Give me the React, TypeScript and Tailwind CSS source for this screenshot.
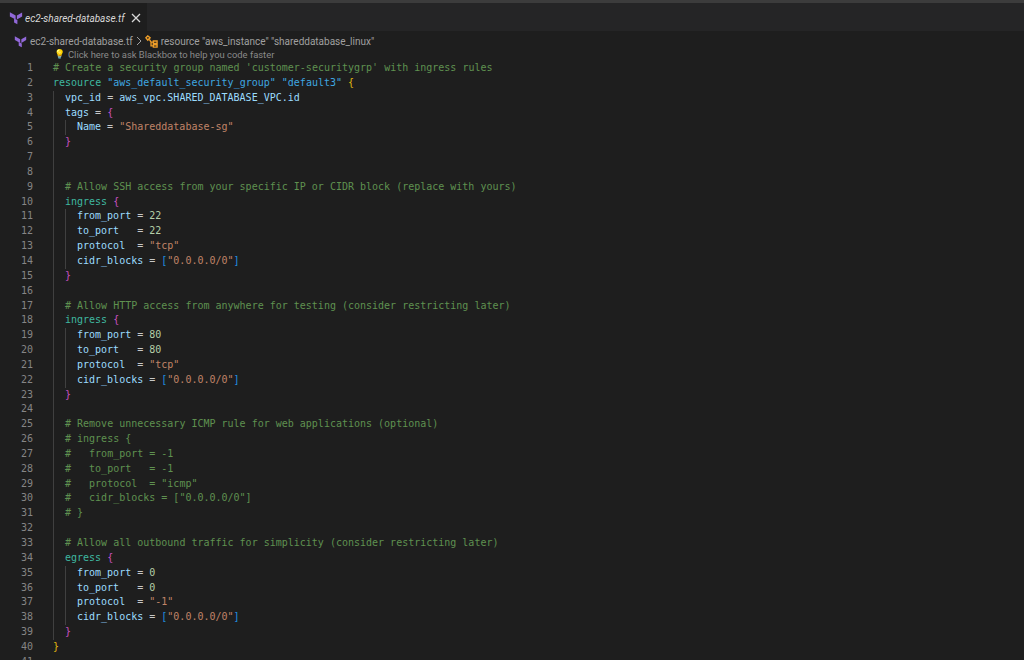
import React from 'react';

type Tok = [string, string];

const C = 'text-[#5f9150]';
const K = 'text-[#3fb8a0]';
const L = 'text-[#3fa7e0]';
const A = 'text-[#9cdcfe]';
const S = 'text-[#c08468]';
const N = 'text-[#b5cea8]';
const P = 'text-[#c8c8c8]';
const G = 'text-[#e0b810]';
const M = 'text-[#c850c0]';
const B = 'text-[#1f8fe0]';

const attr = (name: string, val: Tok[]): Tok[] => [[name, A], [' = ', P], ...val];
const cidr: Tok[] = [['cidr_blocks', A], [' = ', P], ['[', B], ['"0.0.0.0/0"', S], [']', B]];

const block = (from: string, proto: string): { d: number; t: Tok[] }[] => [
  { d: 2, t: [['from_port', A], [' = ', P], [from, N]] },
  { d: 2, t: [['to_port', A], ['   = ', P], [from, N]] },
  { d: 2, t: [['protocol', A], ['  = ', P], [`"${proto}"`, S]] },
  { d: 2, t: cidr },
];

const lines: { d: number; t: Tok[] }[] = [
  { d: 0, t: [["# Create a security group named 'customer-securitygrp' with ingress rules", C]] },
  { d: 0, t: [['resource', K], [' ', P], ['"aws_default_security_group"', L], [' ', P], ['"default3"', L], [' ', P], ['{', G]] },
  { d: 1, t: [['vpc_id', A], [' = ', P], ['aws_vpc.SHARED_DATABASE_VPC.id', A]] },
  { d: 1, t: [['tags', A], [' = ', P], ['{', M]] },
  { d: 2, t: attr('Name', [['"Shareddatabase-sg"', S]]) },
  { d: 1, t: [['}', M]] },
  { d: 1, t: [] },
  { d: 1, t: [] },
  { d: 1, t: [['# Allow SSH access from your specific IP or CIDR block (replace with yours)', C]] },
  { d: 1, t: [['ingress', K], [' ', P], ['{', M]] },
  ...block('22', 'tcp'),
  { d: 1, t: [['}', M]] },
  { d: 1, t: [] },
  { d: 1, t: [['# Allow HTTP access from anywhere for testing (consider restricting later)', C]] },
  { d: 1, t: [['ingress', K], [' ', P], ['{', M]] },
  ...block('80', 'tcp'),
  { d: 1, t: [['}', M]] },
  { d: 1, t: [] },
  { d: 1, t: [['# Remove unnecessary ICMP rule for web applications (optional)', C]] },
  { d: 1, t: [['# ingress {', C]] },
  { d: 1, t: [['#   from_port = -1', C]] },
  { d: 1, t: [['#   to_port   = -1', C]] },
  { d: 1, t: [['#   protocol  = "icmp"', C]] },
  { d: 1, t: [['#   cidr_blocks = ["0.0.0.0/0"]', C]] },
  { d: 1, t: [['# }', C]] },
  { d: 1, t: [] },
  { d: 1, t: [['# Allow all outbound traffic for simplicity (consider restricting later)', C]] },
  { d: 1, t: [['egress', K], [' ', P], ['{', M]] },
  ...block('0', '-1'),
  { d: 1, t: [['}', M]] },
  { d: 0, t: [['}', G]] },
];

const TfIcon = ({ className }: { className: string }) => (
  <svg viewBox="0 0 16 16" className={className} fill="#9168d8">
    <path d="M1 1.5 7.6 5.2v4.6L1 6.2z" />
    <path d="M9 5.2 15 1.8v4.4L9 9.8z" />
    <path d="M5.8 8.6 9.6 10.4v4.8L5.8 13.2z" />
  </svg>
);

const App: React.FC = () => {
  return (
    <div className="h-[660px] w-[1024px] overflow-hidden bg-[#1e1e1e] font-['Roboto',sans-serif]">
      <div className="h-[3px] bg-[#3c3c3c]" />
      {/* Tabs */}
      <div className="flex h-[28px] bg-[#252526]">
        <div className="flex w-[147px] items-center whitespace-nowrap bg-[#1e1e1e] pl-[9px] pt-[2px]">
          <TfIcon className="h-[14px] w-[14px] shrink-0" />
          <span className="ml-[2px] text-[10px] italic text-[#d8d8d8]">ec2-shared-database.tf</span>
          <svg viewBox="0 0 10 10" className="ml-[6px] h-[10px] w-[10px]" fill="none" stroke="#d8d8d8" strokeWidth="1.3">
            <path d="M1 1l8 8M9 1l-8 8" />
          </svg>
        </div>
      </div>
      {/* Breadcrumbs */}
      <div className="flex h-[18px] items-center whitespace-nowrap pl-[14px] pt-[2px] text-[10px] text-[#a0a0a0]">
        <TfIcon className="h-[13px] w-[13px]" />
        <span className="ml-[3px]">ec2-shared-database.tf</span>
        <svg viewBox="0 0 8 10" className="mx-[2px] h-[10px] w-[8px]" fill="none" stroke="#a0a0a0">
          <path d="M2 1l4 4-4 4" />
        </svg>
        <svg viewBox="0 0 14 14" className="h-[13px] w-[13px]" fill="none" stroke="#ee9d28" strokeWidth="1.5">
          <path d="M1 3 3 1 5.5 3 3 5.5zM9 6.5h4v2.5H9zM9 10.5h4V13H9zM4.5 4.5 6.5 7.7H9M6.5 7.7v4H9" />
        </svg>
        <span className="ml-[3px]">resource "aws_instance" "shareddatabase_linux"</span>
      </div>
      {/* Blackbox hint */}
      <div className="flex h-[12px] items-center whitespace-nowrap pl-[54px] text-[9.4px] text-[#8a8a8a]">
        <span className="w-[14px] text-[9px]">💡</span>
        <span>Click here to ask Blackbox to help you code faster</span>
      </div>
      {/* Code */}
      <div className="font-['DejaVu_Sans_Mono',monospace] text-[10px] leading-[14.85px]">
        {lines.map((line, i) => (
          <div key={i} className="flex h-[14.85px]">
            <div className="w-[33px] shrink-0 text-right text-[#858585]">{i + 1}</div>
            <div className="flex pl-[20px] whitespace-pre">
              {Array.from({ length: line.d }).map((_, j) => (
                <span key={j} className="inline-block w-[12px] border-l border-[#404040]" />
              ))}
              <span>
                {line.t.map((tok, j) => (
                  <span key={j} className={tok[1]}>{tok[0]}</span>
                ))}
              </span>
            </div>
          </div>
        ))}
        <div className="h-[6px] w-[33px] overflow-hidden text-right leading-[14.85px] text-[#858585]">41</div>
      </div>
    </div>
  );
};

export default App;
